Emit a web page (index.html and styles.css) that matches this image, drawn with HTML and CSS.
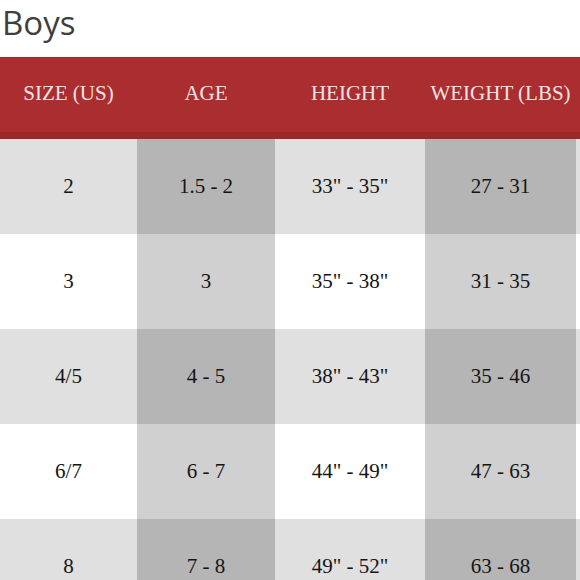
FILE: index.html
```html
<!DOCTYPE html>
<html>
<head>
<meta charset="utf-8">
<link rel="stylesheet" href="styles.css">
</head>
<body>
<h1 class="title">Boys</h1>
<div class="chart">
  <div class="row head">
    <div class="cell">SIZE (US)</div>
    <div class="cell">AGE</div>
    <div class="cell">HEIGHT</div>
    <div class="cell">WEIGHT (LBS)</div>
  </div>
  <div class="row shade">
    <div class="cell">2</div>
    <div class="cell dark">1.5 - 2</div>
    <div class="cell">33" - 35"</div>
    <div class="cell dark">27 - 31</div>
  </div>
  <div class="row plain">
    <div class="cell">3</div>
    <div class="cell dark">3</div>
    <div class="cell">35" - 38"</div>
    <div class="cell dark">31 - 35</div>
  </div>
  <div class="row shade">
    <div class="cell">4/5</div>
    <div class="cell dark">4 - 5</div>
    <div class="cell">38" - 43"</div>
    <div class="cell dark">35 - 46</div>
  </div>
  <div class="row plain">
    <div class="cell">6/7</div>
    <div class="cell dark">6 - 7</div>
    <div class="cell">44" - 49"</div>
    <div class="cell dark">47 - 63</div>
  </div>
  <div class="row shade">
    <div class="cell">8</div>
    <div class="cell dark">7 - 8</div>
    <div class="cell">49" - 52"</div>
    <div class="cell dark">63 - 68</div>
  </div>
</div>
</body>
</html>
```
FILE: styles.css
```css
html, body {
  margin: 0;
  padding: 0;
  background: #ffffff;
  overflow: hidden;
}

.title {
  margin: 0;
  height: 57px;
  padding-left: 2px;
  font-family: "Open Sans", sans-serif;
  font-weight: 400;
  font-size: 33px;
  line-height: 45px;
  color: #3f3f3f;
}

.chart {
  width: 580px;
  height: 523px;
  overflow: hidden;
}

.row {
  display: grid;
  grid-template-columns: 137px 138px 150px 151px 1fr;
  font-family: "Liberation Serif", serif;
  font-size: 21px;
}

.cell {
  display: flex;
  align-items: center;
  justify-content: center;
}

.head {
  height: 74px;
  background: #aa2d30;
  border-top: 1px solid #9e2a2c;
  border-bottom: 7px solid #9b2729;
  color: #f6e4e4;
  box-sizing: content-box;
}

.head .cell {
  padding-bottom: 3px;
}

.shade,
.plain {
  height: 95px;
  color: #151515;
}

.shade { background: #e0e0e0; }
.plain { background: #ffffff; }

.shade .dark { background: #b5b5b5; }
.plain .dark { background: #d0d0d0; }
```
